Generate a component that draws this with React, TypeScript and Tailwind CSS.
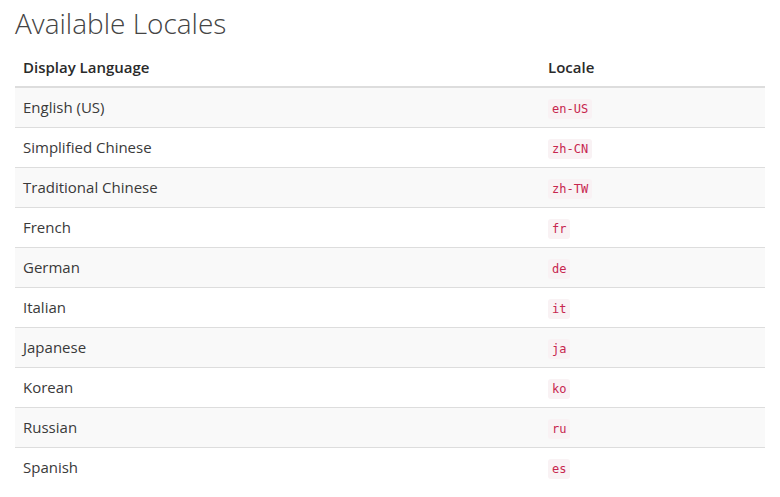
const locales: Array<[string, string]> = [
  ["English (US)", "en-US"],
  ["Simplified Chinese", "zh-CN"],
  ["Traditional Chinese", "zh-TW"],
  ["French", "fr"],
  ["German", "de"],
  ["Italian", "it"],
  ["Japanese", "ja"],
  ["Korean", "ko"],
  ["Russian", "ru"],
  ["Spanish", "es"],
];

export default function App() {
  return (
    <div className="min-h-screen bg-white px-[15px] text-[#3a3a3a] font-['Open_Sans','Noto_Sans',sans-serif]">
      <h1 className="pt-[4px] text-[28px] font-light leading-[38px] text-[#444]">Available Locales</h1>
      <table className="mt-[5px] w-[750px] border-collapse text-[15px]">
        <thead>
          <tr className="border-b-2 border-[#ddd]">
            <th className="h-10 w-[525px] px-2 py-0 text-left font-semibold leading-6 text-[#2a2a2a]">Display Language</th>
            <th className="h-10 px-2 py-0 text-left font-semibold leading-6 text-[#2a2a2a]">Locale</th>
          </tr>
        </thead>
        <tbody>
          {locales.map(([name, code], i) => (
            <tr key={code} className={(i % 2 === 0 ? "bg-[#f9f9f9]" : "bg-white") + " border-t border-[#ddd]"}>
              <td className="h-10 px-2 py-0 leading-6">{name}</td>
              <td className="h-10 px-2 py-0 leading-6">
                <code className="inline-block rounded-[3px] bg-[#f9f2f4] px-[4px] py-[2px] font-['DejaVu_Sans_Mono',monospace] text-[12px] leading-4 text-[#c7254e]">
                  {code}
                </code>
              </td>
            </tr>
          ))}
        </tbody>
      </table>
    </div>
  );
}
